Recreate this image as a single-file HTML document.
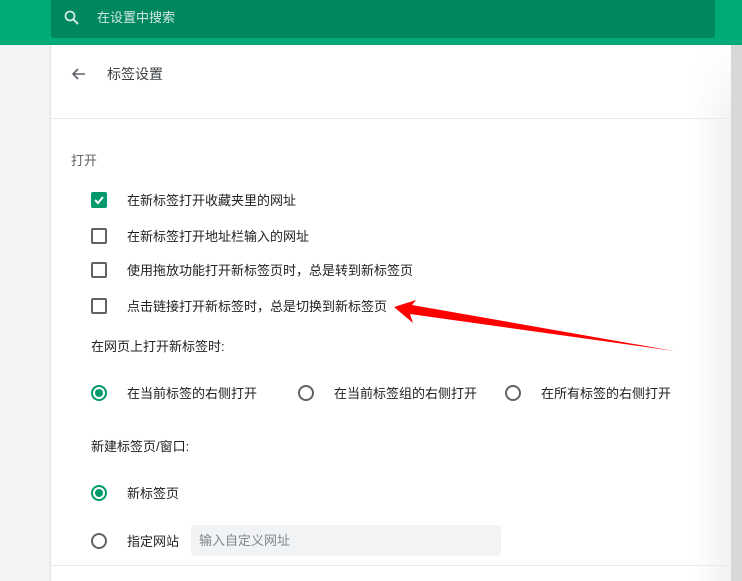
<!DOCTYPE html>
<html><head><meta charset="utf-8"><style>
*{margin:0;padding:0;box-sizing:border-box}
body{width:742px;height:581px;overflow:hidden;background:#f1f3f4;font-family:"Liberation Sans","Noto Sans CJK SC",sans-serif;font-size:13px;color:#202124;position:relative}
.a{position:absolute;white-space:nowrap;line-height:18px}
.cb{position:absolute;width:16px;height:16px;border:2px solid #5f6368;border-radius:2px}
.rd{position:absolute;width:16px;height:16px;border:2px solid #5f6368;border-radius:50%}
.rd.on{border-color:#00996b}
.rd.on::after{content:"";position:absolute;left:2px;top:2px;width:8px;height:8px;border-radius:50%;background:#00996b}
</style></head><body>
<div style="position:absolute;left:0;top:0;width:742px;height:45px;background:#00ab78"></div>
<div style="position:absolute;left:51px;top:0;width:664px;height:38px;background:#00875f;border-radius:0 0 3px 3px"></div>
<svg style="position:absolute;left:63px;top:9px" width="18" height="18" viewBox="0 0 18 18"><circle cx="7" cy="7" r="4.5" fill="none" stroke="#cfe9df" stroke-width="1.8"/><path d="M10.3 10.3 L15 15" stroke="#cfe9df" stroke-width="2"/></svg>
<div class="a" style="left:97px;top:9px;color:#cfe9df;font-size:13px">在设置中搜索</div>
<div style="position:absolute;left:51px;top:45px;width:680px;height:536px;background:#fff;box-shadow:0 0 2px rgba(0,0,0,.2)"></div>
<div style="position:absolute;left:690px;top:45px;width:41px;height:536px;background:linear-gradient(to right,rgba(255,255,255,0),rgba(0,0,0,.05));-webkit-mask:linear-gradient(to bottom,transparent 0,#000 80px);mask:linear-gradient(to bottom,transparent 0,#000 80px)"></div>
<div style="position:absolute;left:731px;top:45px;width:11px;height:536px;background:#d8d8d8"></div>
<svg style="position:absolute;left:70px;top:66px" width="16" height="16" viewBox="0 0 16 16"><path d="M15 8H3M8 3L3 8l5 5" fill="none" stroke="#5f6368" stroke-width="1.6"/></svg>
<div class="a" style="left:107px;top:65px;font-size:14px;color:#3c4043">标签设置</div>
<div style="position:absolute;left:51px;top:118px;width:680px;height:1px;background:#e8eaed"></div>
<div class="a" style="left:71px;top:152px;color:#5f6368">打开</div>
<div class="cb" style="left:91px;top:192px;background:#00996b;border-color:#00996b"><svg width="12" height="12" viewBox="0 0 12 12" style="position:absolute;left:0;top:0"><path d="M2 6l3 3 5-6" fill="none" stroke="#fff" stroke-width="2"/></svg></div>
<div class="a" style="left:127px;top:192px">在新标签打开收藏夹里的网址</div>
<div class="cb" style="left:91px;top:228px"></div>
<div class="a" style="left:127px;top:228px">在新标签打开地址栏输入的网址</div>
<div class="cb" style="left:91px;top:262px"></div>
<div class="a" style="left:127px;top:262px">使用拖放功能打开新标签页时，总是转到新标签页</div>
<div class="cb" style="left:91px;top:298px"></div>
<div class="a" style="left:127px;top:298px">点击链接打开新标签时，总是切换到新标签页</div>
<div class="a" style="left:91px;top:338px">在网页上打开新标签时:</div>
<div class="rd on" style="left:91px;top:385px"></div>
<div class="a" style="left:127px;top:385px">在当前标签的右侧打开</div>
<div class="rd" style="left:298px;top:385px"></div>
<div class="a" style="left:334px;top:385px">在当前标签组的右侧打开</div>
<div class="rd" style="left:505px;top:385px"></div>
<div class="a" style="left:541px;top:385px">在所有标签的右侧打开</div>
<div class="a" style="left:91px;top:438px">新建标签页/窗口:</div>
<div class="rd on" style="left:91px;top:485px"></div>
<div class="a" style="left:127px;top:485px">新标签页</div>
<div class="rd" style="left:91px;top:533px"></div>
<div class="a" style="left:127px;top:533px">指定网站</div>
<div style="position:absolute;left:191px;top:525px;width:310px;height:31px;background:#f1f3f4;border-radius:4px"></div>
<div class="a" style="left:199px;top:532px;color:#80868b">输入自定义网址</div>
<div style="position:absolute;left:51px;top:565px;width:680px;height:1px;background:#e8eaed"></div>
<svg style="position:absolute;left:0;top:0" width="742" height="581"><polygon points="394,307 416,300 412,305 674,351 410,314 413,323" fill="#f00"/></svg>
</body></html>
